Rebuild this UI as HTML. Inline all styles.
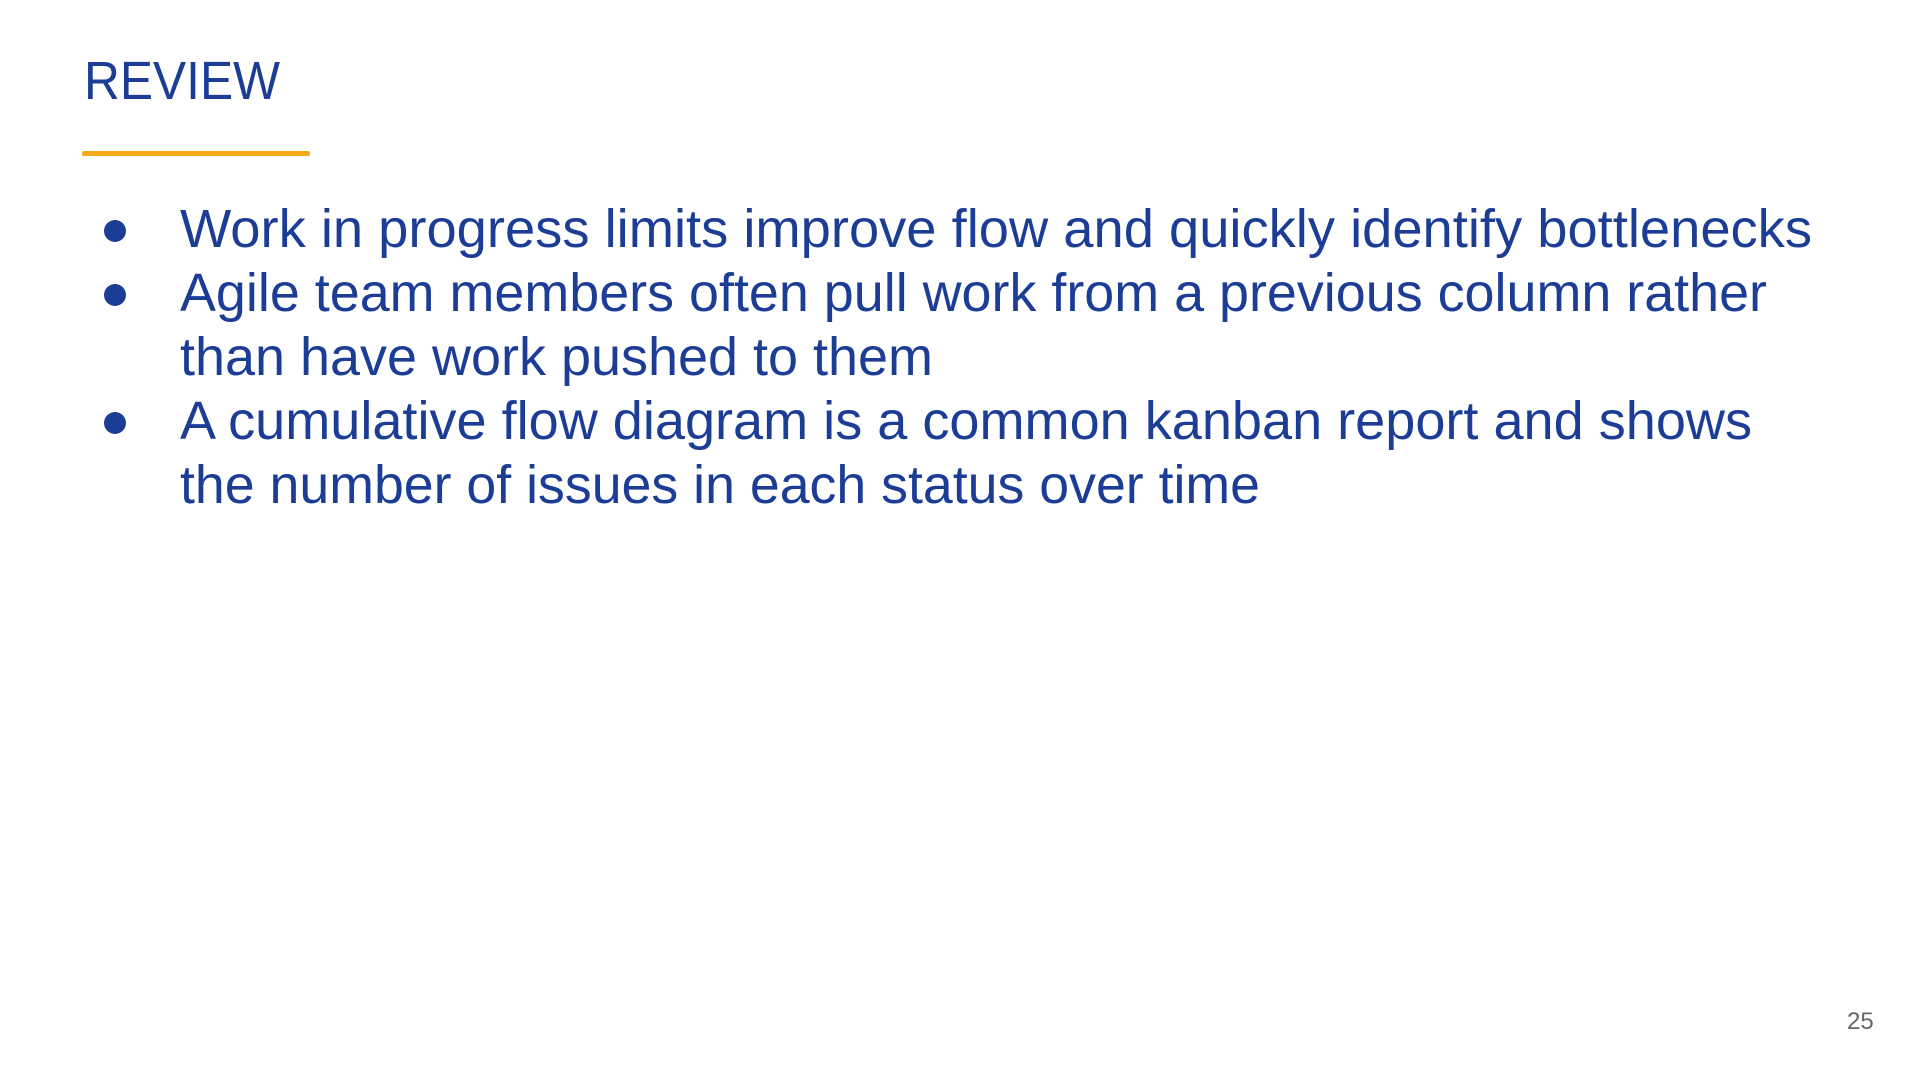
<!DOCTYPE html>
<html><head><meta charset="utf-8"><style>
html,body{margin:0;padding:0;background:#fff;width:1920px;height:1080px;overflow:hidden}
svg{display:block}
text{font-family:"Liberation Sans",Arial,sans-serif}
</style></head><body>
<svg width="1920" height="1080" viewBox="0 0 1920 1080">
<rect width="1920" height="1080" fill="#fff"/>
<text x="84" y="99" font-size="54" fill="#1c3d96" textLength="196" lengthAdjust="spacingAndGlyphs">REVIEW</text>
<rect x="82" y="151" width="228" height="5" rx="2" fill="#f5a81c"/>
<g fill="#1c3d96">
<circle cx="115" cy="231" r="11"/>
<circle cx="115" cy="295" r="11"/>
<circle cx="115" cy="423" r="11"/>
<g font-size="54">
<text x="180" y="247" textLength="1632" lengthAdjust="spacingAndGlyphs">Work in progress limits improve flow and quickly identify bottlenecks</text>
<text x="180" y="311" textLength="1587" lengthAdjust="spacingAndGlyphs">Agile team members often pull work from a previous column rather</text>
<text x="180" y="375" textLength="753" lengthAdjust="spacingAndGlyphs">than have work pushed to them</text>
<text x="180" y="439" textLength="1572" lengthAdjust="spacingAndGlyphs">A cumulative flow diagram is a common kanban report and shows</text>
<text x="180" y="503" textLength="1080" lengthAdjust="spacingAndGlyphs">the number of issues in each status over time</text>
</g>
</g>
<text x="1847" y="1029" font-size="24" fill="#666">25</text>
</svg>
</body></html>
